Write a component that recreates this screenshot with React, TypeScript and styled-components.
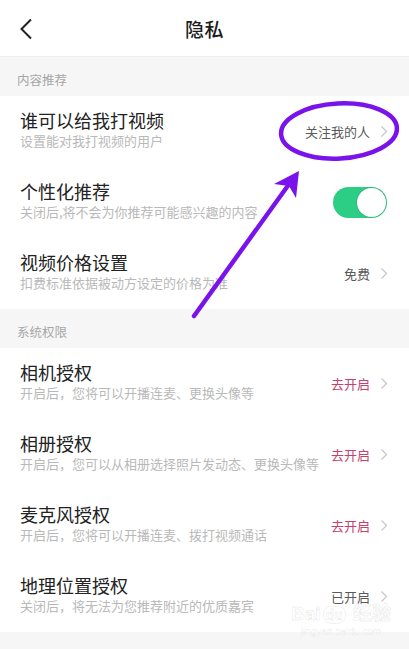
import styled, { createGlobalStyle } from "styled-components";

const GlobalStyle = createGlobalStyle`
  * { box-sizing: border-box; }
  body {
    margin: 0;
    background: #ffffff;
    font-family: "Noto Sans CJK SC", "Noto Sans", sans-serif;
  }
`;

type Item = {
  title: string;
  sub: string;
  value?: string;
  tone?: "plain" | "action";
  toggle?: boolean;
};

const recommend: Item[] = [
  { title: "谁可以给我打视频", sub: "设置能对我打视频的用户", value: "关注我的人" },
  { title: "个性化推荐", sub: "关闭后,将不会为你推荐可能感兴趣的内容", toggle: true },
  { title: "视频价格设置", sub: "扣费标准依据被动方设定的价格为准", value: "免费" },
];

const system: Item[] = [
  { title: "相机授权", sub: "开启后，您将可以开播连麦、更换头像等", value: "去开启", tone: "action" },
  { title: "相册授权", sub: "开启后，您可以从相册选择照片发动态、更换头像等", value: "去开启", tone: "action" },
  { title: "麦克风授权", sub: "开启后，您将可以开播连麦、拨打视频通话", value: "去开启", tone: "action" },
  { title: "地理位置授权", sub: "关闭后，将无法为您推荐附近的优质嘉宾", value: "已开启" },
];

function Chevron() {
  return (
    <svg width="8" height="13" viewBox="0 0 8 13">
      <polyline points="1.5,1.5 6.5,6.5 1.5,11.5" fill="none" stroke="#c8c8c8" strokeWidth="1.3" />
    </svg>
  );
}

function SettingRow({ item }: { item: Item }) {
  return (
    <Row>
      <TextCol>
        <Title>{item.title}</Title>
        <Sub>{item.sub}</Sub>
      </TextCol>
      {item.toggle ? (
        <Switch />
      ) : (
        <Value $tone={item.tone ?? "plain"}>
          {item.value}
          <Chevron />
        </Value>
      )}
    </Row>
  );
}

export default function App() {
  return (
    <Page>
      <GlobalStyle />
      <Header>
        <Back>
          <svg width="14" height="22" viewBox="0 0 14 22">
            <polyline points="12,1.5 2.5,11 12,20.5" fill="none" stroke="#222" strokeWidth="2" />
          </svg>
        </Back>
        <HeaderTitle>隐私</HeaderTitle>
      </Header>

      <SectionLabel>内容推荐</SectionLabel>
      {recommend.map((item) => (
        <SettingRow key={item.title} item={item} />
      ))}

      <SectionLabel>系统权限</SectionLabel>
      {system.map((item) => (
        <SettingRow key={item.title} item={item} />
      ))}

      <Footer />

      <Watermark>
        <Mark>Bai<Paw>du</Paw> 经验</Mark>
        <MarkUrl>jingyan.baidu.com</MarkUrl>
      </Watermark>

      <Annotation width="409" height="649" viewBox="0 0 409 649">
        <ellipse cx="339" cy="131" rx="58" ry="27.5" transform="rotate(-3 339 131)" fill="none" stroke="#7a12ec" strokeWidth="4.5" />
        <line x1="194" y1="316" x2="292" y2="180" stroke="#7a12ec" strokeWidth="4.5" strokeLinecap="round" />
        <polygon points="299,171 274,184 289,186 296,198" fill="#7a12ec" />
      </Annotation>
    </Page>
  );
}

const Page = styled.div`
  position: relative;
  width: 409px;
  height: 649px;
  overflow: hidden;
  background: #ffffff;
`;

const Header = styled.div`
  position: relative;
  height: 57px;
  display: flex;
  align-items: center;
  justify-content: center;
  border-bottom: 1px solid #ececec;
`;

const Back = styled.div`
  position: absolute;
  left: 19px;
  top: 18px;
  display: flex;
`;

const HeaderTitle = styled.div`
  font-size: 19px;
  font-weight: 500;
  color: #1c1c1c;
  letter-spacing: 0.5px;
`;

const SectionLabel = styled.div`
  height: 39px;
  display: flex;
  align-items: center;
  padding: 6px 0 0 17px;
  background: #f6f6f6;
  font-size: 12.5px;
  color: #a6a6a6;
`;

const Row = styled.div`
  height: 71px;
  display: flex;
  align-items: center;
  justify-content: space-between;
  padding: 0 21px 4px 20px;
`;

const TextCol = styled.div`
  display: flex;
  flex-direction: column;
  gap: 1px;
  min-width: 0;
`;

const Title = styled.div`
  font-size: 18px;
  line-height: 22px;
  color: #222222;
`;

const Sub = styled.div`
  font-size: 13px;
  line-height: 18px;
  color: #b9b9b9;
  white-space: nowrap;
`;

const Value = styled.div<{ $tone: "plain" | "action" }>`
  display: flex;
  align-items: center;
  gap: 10px;
  flex-shrink: 0;
  margin-top: 4px;
  font-size: 13px;
  color: ${(p) => (p.$tone === "action" ? "#c2436e" : "#5a5a5a")};
`;

const Switch = styled.div`
  position: relative;
  width: 54px;
  height: 31px;
  margin: 4px 1px 0 0;
  border-radius: 16px;
  background: #2ccd85;
  flex-shrink: 0;
  &::after {
    content: "";
    position: absolute;
    right: 1px;
    top: 1px;
    width: 29px;
    height: 29px;
    border-radius: 50%;
    background: #ffffff;
    box-shadow: 0 0 0 1px rgba(0, 0, 0, 0.08);
  }
`;

const Footer = styled.div`
  height: 20px;
  background: #f6f6f6;
`;

const Watermark = styled.div`
  position: absolute;
  left: 291px;
  top: 603px;
  display: flex;
  flex-direction: column;
  align-items: center;
  pointer-events: none;
`;

const Mark = styled.div`
  font-family: "Liberation Sans", "Noto Sans CJK SC", sans-serif;
  font-size: 19px;
  font-weight: 700;
  line-height: 22px;
  color: rgba(255, 255, 255, 0.6);
  -webkit-text-stroke: 1px rgba(0, 0, 0, 0.08);
`;

const Paw = styled.span`
  font-size: 14px;
  padding: 0 2px;
  margin: 0 2px;
  border-radius: 8px;
  border: 1px solid rgba(0, 0, 0, 0.06);
`;

const MarkUrl = styled.div`
  font-family: "Liberation Sans", sans-serif;
  font-size: 10px;
  line-height: 12px;
  color: rgba(255, 255, 255, 0.7);
  -webkit-text-stroke: 0.6px rgba(0, 0, 0, 0.07);
`;

const Annotation = styled.svg`
  position: absolute;
  left: 0;
  top: 0;
  pointer-events: none;
`;
